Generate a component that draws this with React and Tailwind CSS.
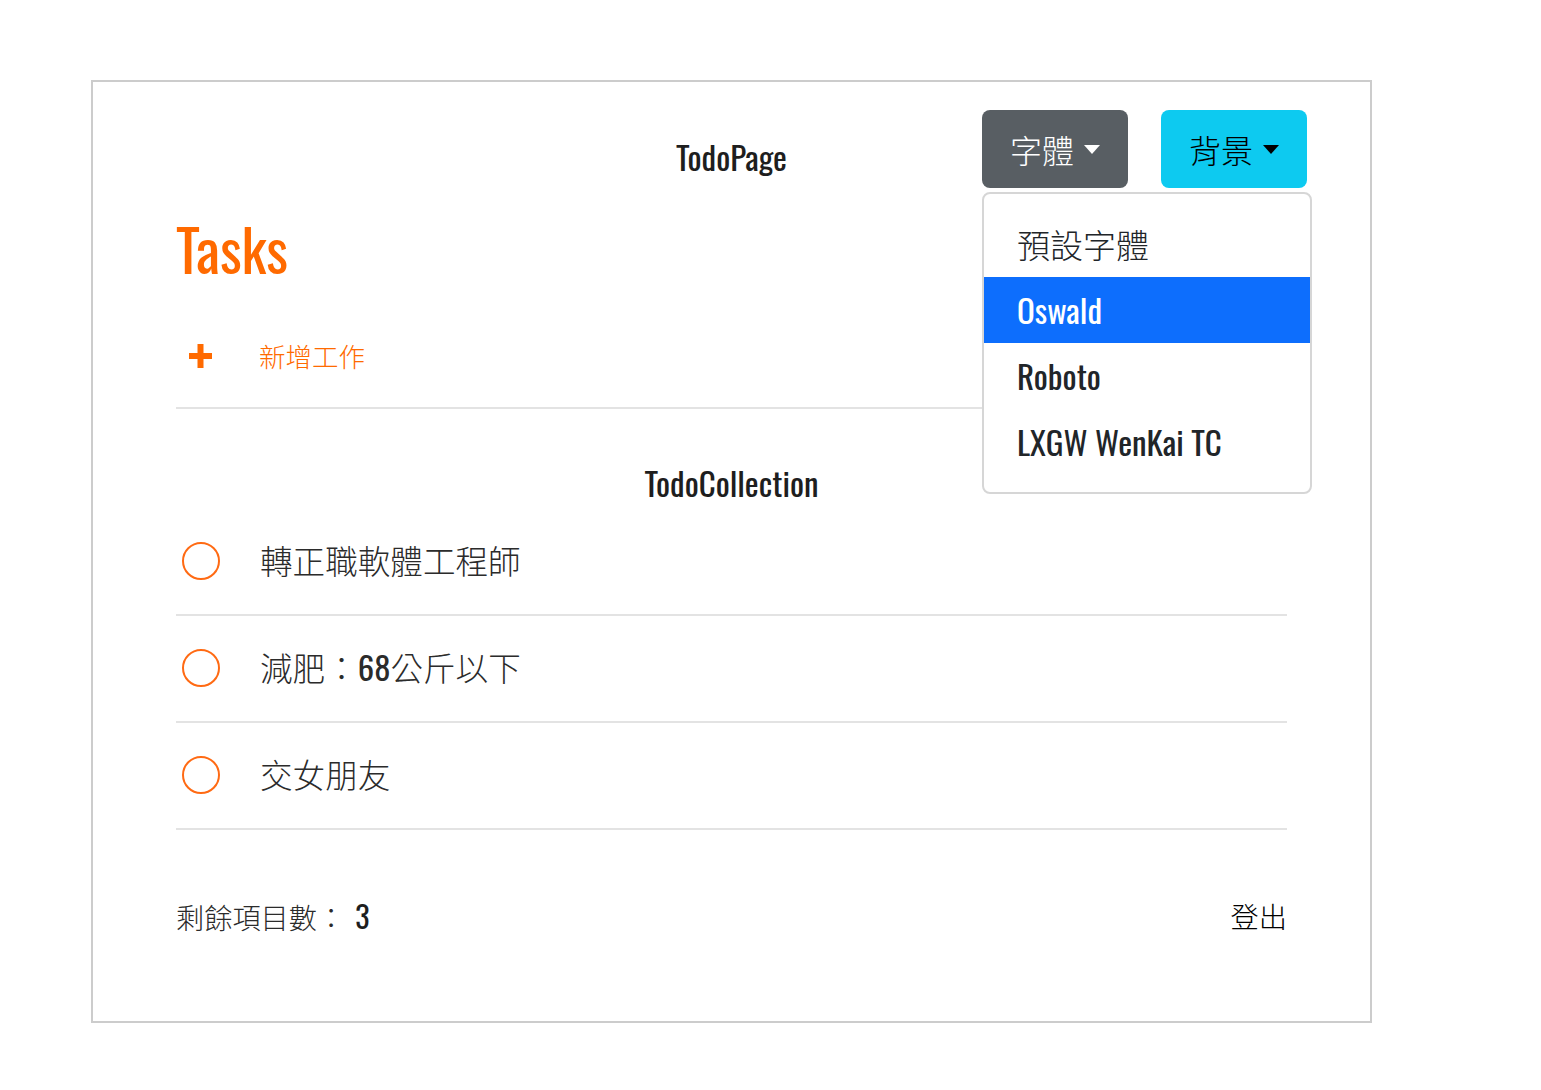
import { useState } from "react";

const todos = [
    { id: 1, title: "轉正職軟體工程師" },
    { id: 2, title: "減肥：68公斤以下" },
    { id: 3, title: "交女朋友" },
];

const fonts = ["預設字體", "Oswald", "Roboto", "LXGW WenKai TC"];

// CJK glyphs come out thin in the original, latin/digits keep Oswald's regular weight
const Mixed = ({ text }) =>
    text.split(/([A-Za-z0-9 ]+)/).map((part, i) =>
        /[A-Za-z0-9]/.test(part) ? (
            <span key={i} className="font-normal">
                {part}
            </span>
        ) : (
            <span key={i} className="font-light">
                {part}
            </span>
        )
    );

const Caret = ({ color }) => (
    <span
        className={`ml-[10px] inline-block w-0 h-0 border-x-[8px] border-x-transparent border-t-[9px] ${color}`}
    />
);

const TodoItem = ({ todo }) => (
    <li className="flex items-center h-[107px] border-b-2 border-[#e3e3e3]">
        <span className="ml-[6px] mb-[2px] w-[38px] h-[38px] rounded-full border-2 border-[#ff6a13]" />
        <span className="ml-[40px] pb-[6px] text-[32.6px] leading-[44px] text-[#2b2b2b]">
            <Mixed text={todo.title} />
        </span>
    </li>
);

export default function App() {
    const [active] = useState("Oswald");

    return (
        <div className="min-h-[1090px] bg-white pt-[80px] pl-[91px] font-['Oswald','Noto_Sans_CJK_TC',sans-serif]">
            <div className="relative w-[1281px] h-[943px] border-2 border-[#cccccc] px-[83px]">
                {/* header */}
                <div className="pt-[51px] h-[112px] text-center text-[33px] leading-[48px] text-[#1e1e1e]">
                    TodoPage
                </div>

                <div className="absolute top-[28px] right-[63px] flex gap-[33px]">
                    <button className="flex items-center justify-center w-[146px] h-[78px] rounded-[8px] bg-[#585e63] text-white text-[32px] font-light">
                        字體
                        <Caret color="border-t-white" />
                    </button>
                    <button className="flex items-center justify-center w-[146px] h-[78px] rounded-[8px] bg-[#0dcaf0] text-black text-[32px] font-light">
                        背景
                        <Caret color="border-t-black" />
                    </button>
                </div>

                {/* dropdown menu */}
                <ul className="absolute z-10 top-[110px] right-[58px] w-[330px] py-[17px] bg-white border-2 border-[#d6d6d6] rounded-[8px]">
                    {fonts.map((f) => (
                        <li
                            key={f}
                            className={`h-[66px] flex items-center px-[33px] text-[33px] ${
                                f === active ? "bg-[#0d6efd] text-white" : "text-[#212529]"
                            }`}
                        >
                            <Mixed text={f} />
                        </li>
                    ))}
                </ul>

                <h1 className="h-[104px] pt-[18px] text-[58px] leading-[72px] text-[#ff6a00]">Tasks</h1>

                <div className="flex items-center h-[111px] pt-[6px] border-b-2 border-[#e3e3e3]">
                    <svg className="ml-[12px]" width="25" height="26" viewBox="0 0 25 26">
                        <path d="M12.5 1v24M1 13h23" stroke="#ff6a00" strokeWidth="6" />
                    </svg>
                    <span className="ml-[46px] text-[26.5px] font-light text-[#ff6a00]">新增工作</span>
                </div>

                <div className="pt-[50px] h-[100px] text-center text-[33px] leading-[48px] text-[#1e1e1e]">
                    TodoCollection
                </div>

                <ul>
                    {todos.map((t) => (
                        <TodoItem key={t.id} todo={t} />
                    ))}
                </ul>

                <div className="flex items-center justify-between mt-[63px] text-[28.2px] font-light">
                    <span className="text-[#2b2b2b]">
                        剩餘項目數：
                        <span className="ml-[10px] text-[30px] font-normal text-[#1e1e1e]">3</span>
                    </span>
                    <button className="text-black">登出</button>
                </div>
            </div>
        </div>
    );
}
